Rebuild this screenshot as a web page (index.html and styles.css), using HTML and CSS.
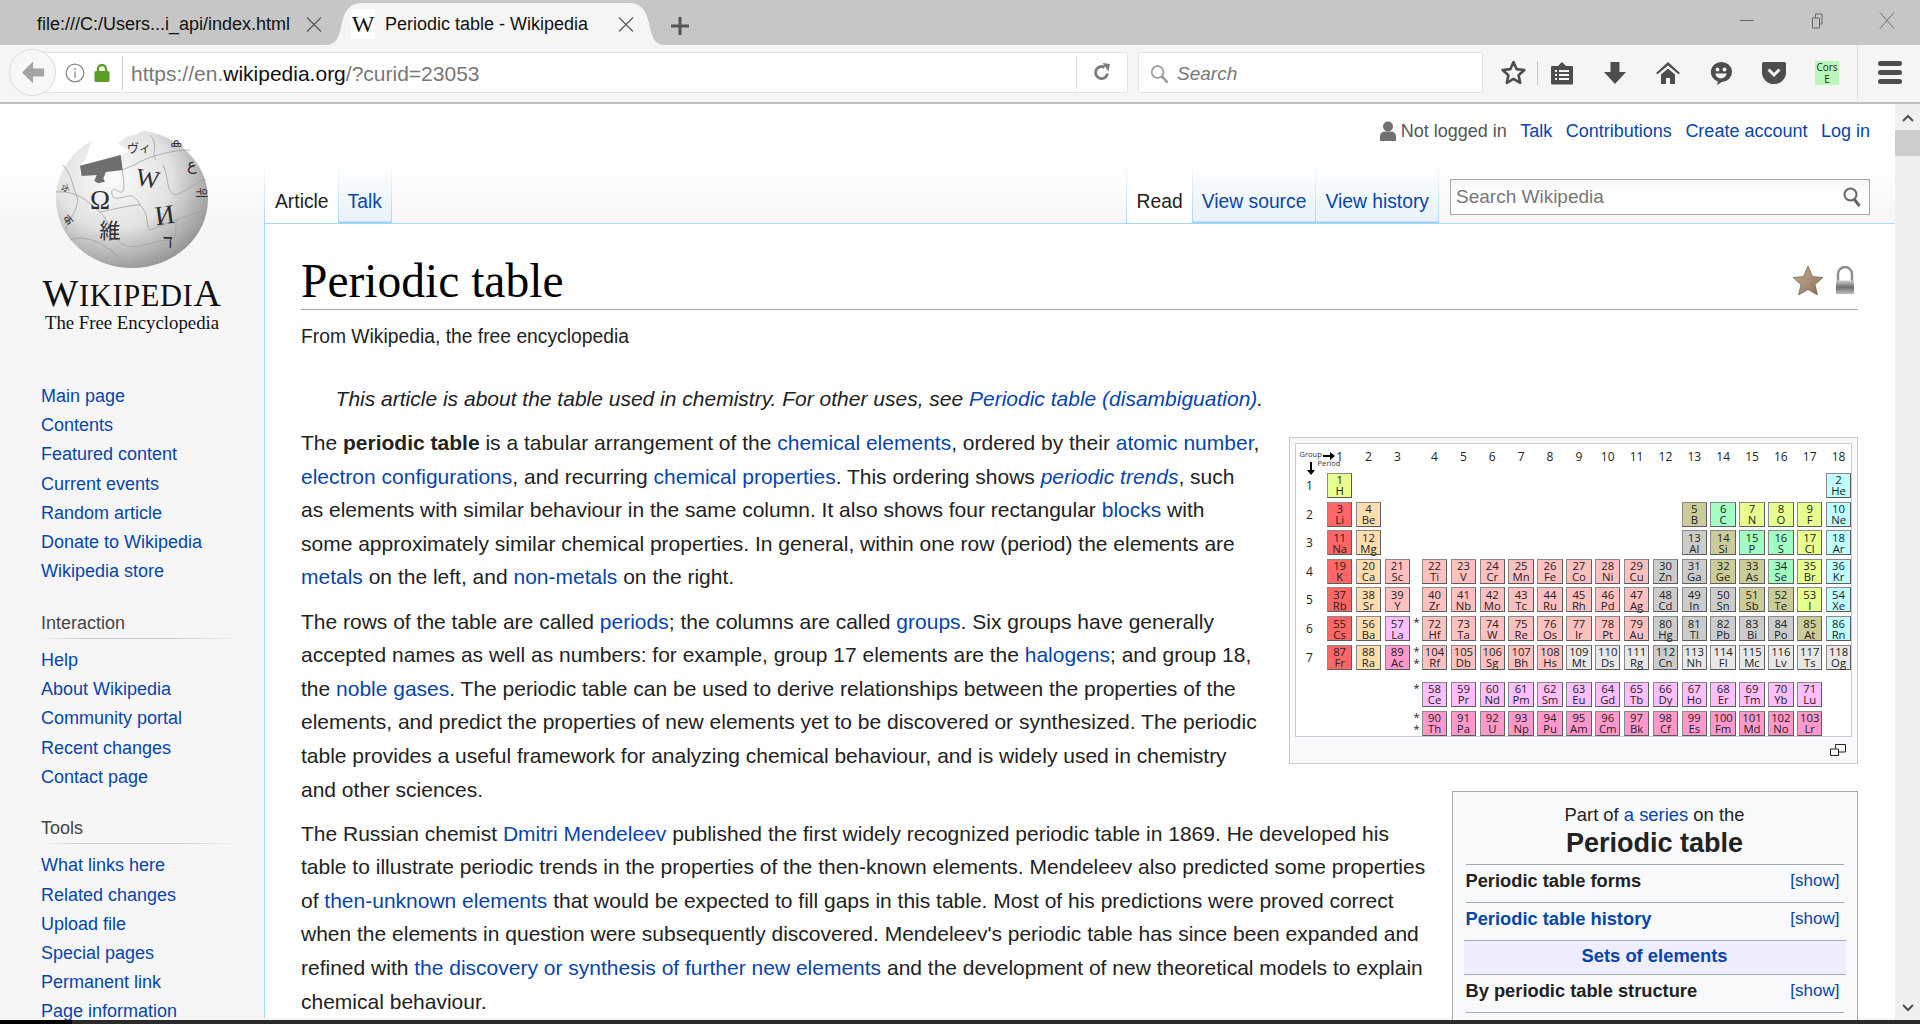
FILE: index.html
```html
<!DOCTYPE html>
<html lang="en">
<head>
    <meta charset="UTF-8">
    <title>Periodic table - Wikipedia</title>
    <link rel="stylesheet" href="styles.css">
</head>
<body>
    <div class="tabstrip">
        <div class="tab">
            <span class="tab-title">file:///C:/Users...i_api/index.html</span>
            <svg class="tab-close" viewBox="0 0 16 16"><path d="M1 1l14 14M15 1L1 15"/></svg>
        </div>
        <div class="tab tab-active">
            <span class="favicon">W</span>
            <span class="tab-title">Periodic table - Wikipedia</span>
            <svg class="tab-close" viewBox="0 0 16 16"><path d="M1 1l14 14M15 1L1 15"/></svg>
        </div>
        <svg class="tab-new" viewBox="0 0 18 18"><path d="M9 0v18M0 9h18"/></svg>
        <div class="window-controls">
            <svg viewBox="0 0 16 16"><path d="M1 8h14"/></svg>
            <svg viewBox="0 0 16 16"><path d="M3.500 5.500h7v10h-7zM6.500 5.500v-4h6.500v10h-2.500"/></svg>
            <svg viewBox="0 0 18 18"><path d="M1 0l16 18M17 0L1 18"/></svg>
        </div>
    </div>

    <div class="toolbar">
        <div class="back-button">
            <svg viewBox="0 0 24 24"><path d="M12 1L1 12l11 11v-7h11V8H12z"/></svg>
        </div>
        <div class="urlbar">
            <svg class="url-info" viewBox="0 0 20 20"><circle cx="10" cy="10" r="8.800"/><path d="M10 8.500v6.500M10 5v1.800"/></svg>
            <svg class="url-lock" viewBox="0 0 16 20"><path d="M4 9V6a4 4 0 0 1 8 0v3" fill="none" stroke="#5b9e24" stroke-width="2.400"/><rect x="0.500" y="8" width="15" height="11" rx="1.500" fill="#5b9e24"/></svg>
            <span class="url-text">https://en.<b>wikipedia.org</b>/?curid=23053</span>
            <span class="url-sep"></span>
            <svg class="url-reload" viewBox="0 0 20 20"><path d="M15.500 10.500a6 6 0 1 1-3-6.200" fill="none" stroke="#7c7c7c" stroke-width="2.800"/><path d="M10.500 0l7.500 1-1.500 7.500z" fill="#7c7c7c"/></svg>
        </div>
        <div class="searchbar">
            <svg viewBox="0 0 20 20"><circle cx="8" cy="8" r="6.200"/><path d="M12.500 12.500l6 6.500" stroke-width="2.600"/></svg>
            <span>Search</span>
        </div>
        <svg class="tool-star" viewBox="0 0 24 24"><path d="M12 2l3 6.800 7.400.8-5.500 5 1.500 7.300L12 18.200l-6.400 3.700 1.500-7.300-5.500-5 7.400-.8z"/></svg>
        <span class="tool-sep"></span>
        <div class="tools">
            <svg viewBox="0 0 24 24"><path d="M2 5h6l4-4 4 4h6a1.500 1.500 0 0 1 1 1.500v16a1.500 1.500 0 0 1-1 1H2a1.500 1.500 0 0 1-1-1v-16A1.500 1.500 0 0 1 2 5z" fill="#4d4d4d"/><path d="M5 10h2M9 10h10M5 14h2M9 14h10M5 18h2M9 18h10" stroke="#f5f5f5" stroke-width="2"/></svg>
            <svg viewBox="0 0 24 24"><path d="M7.500 1h9v10h6.500L12 23 1 11h6.500z" fill="#4d4d4d"/></svg>
            <svg viewBox="0 0 24 24"><path d="M12 1L0 12l1.500 1.200L12 4.500l10.500 8.700L24 12z" fill="#4d4d4d"/><path d="M12 7.500l-7 6V23h5v-6h4v6h5v-9.500z" fill="#4d4d4d"/></svg>
            <svg viewBox="0 0 24 24"><path d="M12 1a10.500 10 0 0 1 1 20l-5 3 1-3.500A10.500 10 0 0 1 12 1z" fill="#4d4d4d"/><circle cx="8.500" cy="8.500" r="1.900" fill="#f5f5f5"/><circle cx="15.500" cy="8.500" r="1.900" fill="#f5f5f5"/><path d="M6.500 12.500h11a5.500 5 0 0 1-11 0z" fill="#f5f5f5"/></svg>
            <svg viewBox="0 0 24 24"><path d="M2.500 1h19A2 2 0 0 1 24 3v8.500A12 11.500 0 0 1 0 11.500V3a2 2 0 0 1 2.500-2z" fill="#4d4d4d"/><path d="M6.500 8.500L12 14l5.500-5.500" fill="none" stroke="#f5f5f5" stroke-width="3"/></svg>
            <div class="cors-badge">Cors<br>E</div>
        </div>
        <span class="tool-sep tool-sep-tall"></span>
        <div class="menu-button"><span></span><span></span><span></span></div>
    </div>

    <div class="viewport">
        <div class="page">
            <aside class="sidebar">
                <div class="logo">
                    <svg class="globe" viewBox="40 125 185 150">
                        <defs>
                            <radialGradient id="globeShade" cx="38%" cy="34%" r="76%">
                                <stop offset="0" stop-color="#fbfbfb"/>
                                <stop offset="0.500" stop-color="#e2e2e2"/>
                                <stop offset="1" stop-color="#868686"/>
                            </radialGradient>
                        </defs>
                        <ellipse cx="132" cy="199" rx="76" ry="69" fill="url(#globeShade)"/>
                        <g class="globe-seams">
                            <path d="M56 192C80 190 90 205 100 212C120 208 130 205 140 205"/>
                            <path d="M122 170L134 165C150 155 175 150 190 150"/>
                            <path d="M163 165C170 180 165 190 175 195C190 190 200 178 206 180"/>
                            <path d="M140 205C150 215 145 225 150 230C170 222 190 215 205 210"/>
                            <path d="M100 212C112 225 110 235 118 240C130 255 150 240 172 240"/>
                            <path d="M70 240C85 235 105 240 130 268"/>
                            <path d="M63 165C72 175 72 185 78 200C76 215 66 222 66 230"/>
                            <path d="M150 135C160 145 150 155 156 160"/>
                            <path d="M122 170C126 190 124 196 116 190C110 186 110 200 118 198C128 198 132 190 140 205"/>
                            <path d="M172 240C180 230 172 222 180 218"/>
                        </g>
                        <path fill="#fff" d="M96.700 128L89.300 146.700L87.300 156L80 165.700L120.700 155L129.300 150.700L117.300 143.300L127.700 136L136.700 134.300L146.700 129L146.700 120L100 120z"/>
                        <path fill="#6e6e6e" d="M80 165.700L120.700 155L122.700 170L106 172L103.300 178.300L105 181.700L98.300 183.300L94.300 181L96.700 175L81.700 176z"/>
                        <g class="globe-glyphs">
                            <text x="100" y="209" font-size="27">Ω</text>
                            <text x="148" y="187" font-size="25" transform="rotate(10 148 177)">W</text>
                            <text x="164" y="224" font-size="27" transform="rotate(-8 164 211)">И</text>
                            <text x="110" y="238" font-size="21" class="glyph-cjk">維</text>
                            <text x="139" y="153" font-size="12" class="glyph-cjk">ヴィ</text>
                            <text x="168" y="248" font-size="20">ד</text>
                            <text x="192" y="170" font-size="16">ع</text>
                            <text x="201" y="197" font-size="12" class="glyph-cjk" transform="rotate(90 201 193)">위</text>
                            <text x="175" y="147" font-size="12">ക</text>
                            <text x="65" y="192" font-size="11" transform="rotate(70 65 188)">ক</text>
                            <text x="68" y="224" font-size="12" transform="rotate(50 68 220)">क</text>
                        </g>
                    </svg>
                    <div class="wordmark"><span>W</span>IKIPEDI<span>A</span></div>
                    <div class="tagline">The Free Encyclopedia</div>
                </div>
                <ul class="portal-list portal-first">
                    <li><a href="#">Main page</a></li>
                    <li><a href="#">Contents</a></li>
                    <li><a href="#">Featured content</a></li>
                    <li><a href="#">Current events</a></li>
                    <li><a href="#">Random article</a></li>
                    <li><a href="#">Donate to Wikipedia</a></li>
                    <li><a href="#">Wikipedia store</a></li>
                </ul>
                <h3 class="portal-heading">Interaction</h3>
                <ul class="portal-list">
                    <li><a href="#">Help</a></li>
                    <li><a href="#">About Wikipedia</a></li>
                    <li><a href="#">Community portal</a></li>
                    <li><a href="#">Recent changes</a></li>
                    <li><a href="#">Contact page</a></li>
                </ul>
                <h3 class="portal-heading">Tools</h3>
                <ul class="portal-list">
                    <li><a href="#">What links here</a></li>
                    <li><a href="#">Related changes</a></li>
                    <li><a href="#">Upload file</a></li>
                    <li><a href="#">Special pages</a></li>
                    <li><a href="#">Permanent link</a></li>
                    <li><a href="#">Page information</a></li>
                </ul>
            </aside>

            <main class="content">
                <div class="personal">
                    <svg class="user-icon" viewBox="0 0 16 20"><circle cx="8" cy="5.500" r="5"/><path d="M0 20v-4.500Q0 11 5 10.500h6q5 .5 5 5V20z"/></svg>
                    <span class="not-logged">Not logged in</span>
                    <a href="#">Talk</a>
                    <a href="#">Contributions</a>
                    <a href="#">Create account</a>
                    <a href="#">Log in</a>
                </div>
                <div class="head-row">
                    <div class="vtabs">
                        <a class="vtab vtab-selected" href="#">Article</a>
                        <a class="vtab" href="#">Talk</a>
                    </div>
                    <div class="head-right">
                        <div class="vtabs">
                            <a class="vtab vtab-selected" href="#">Read</a>
                            <a class="vtab" href="#">View source</a>
                            <a class="vtab" href="#">View history</a>
                        </div>
                        <div class="wiki-search">
                            <span>Search Wikipedia</span>
                            <svg viewBox="0 0 18 20"><circle cx="7.500" cy="7.500" r="6"/><path d="M11.500 12.500l5 6.500" stroke-width="3"/></svg>
                        </div>
                    </div>
                </div>

                <article class="article">
                    <div class="page-icons">
                        <svg class="icon-star" viewBox="0 0 30 29">
                            <defs>
                                <linearGradient id="starFill" x1="0" y1="0" x2="1" y2="1">
                                    <stop offset="0" stop-color="#c9a763"/>
                                    <stop offset="0.500" stop-color="#a8917f"/>
                                    <stop offset="1" stop-color="#8a6f3f"/>
                                </linearGradient>
                            </defs>
                            <path d="M15 0l4.500 10.500L30 11.500l-8 7 2.500 10.500L15 23.500 5.500 29 8 18.500l-8-7 10.500-1z" fill="url(#starFill)" stroke="#5e5340" stroke-width="0.600"/>
                        </svg>
                        <svg class="icon-lock" viewBox="0 0 22 29">
                            <defs>
                                <linearGradient id="lockBody" x1="0" y1="0" x2="0" y2="1">
                                    <stop offset="0" stop-color="#cfcfcf"/>
                                    <stop offset="0.500" stop-color="#6f6f6f"/>
                                    <stop offset="1" stop-color="#bdbdbd"/>
                                </linearGradient>
                            </defs>
                            <path d="M4 16V8a7 7 0 0 1 14 0V16" fill="none" stroke="#8e8e8e" stroke-width="2.400"/>
                            <rect x="2" y="14.500" width="18" height="13.500" rx="1" fill="url(#lockBody)"/>
                        </svg>
                    </div>
                    <h1 class="page-title">Periodic table</h1>
                    <div class="site-sub">From Wikipedia, the free encyclopedia</div>
                    <div class="hatnote">This article is about the table used in chemistry. For other uses, see <a href="#">Periodic table (disambiguation)</a>.</div>

                    <figure class="thumb">
                        <div class="ptable" id="ptable">
                            <div class="ptable-corner">
                                <span class="corner-group">Group</span>
                                <svg class="corner-right" viewBox="0 0 12 8"><path d="M0 3h7V0l5 4-5 4V5H0z"/></svg>
                                <span class="corner-period">Period</span>
                                <svg class="corner-down" viewBox="0 0 8 13"><path d="M3 0h2v8h3l-4 5-4-5h3z"/></svg>
                            </div>
                        </div>
                        <figcaption class="thumb-caption">
                            <svg viewBox="0 0 16 12"><path d="M5.500 4.500V.5h10v7.500H9M.5 5h8v6.500h-8z"/></svg>
                        </figcaption>
                    </figure>

                    <aside class="infobox">
                        <div class="infobox-pre">Part of <a href="#">a series</a> on the</div>
                        <div class="infobox-title">Periodic table</div>
                        <div class="infobox-row"><b>Periodic table forms</b><a class="show-link" href="#">[show]</a></div>
                        <div class="infobox-row"><b><a href="#">Periodic table history</a></b><a class="show-link" href="#">[show]</a></div>
                        <div class="infobox-band"><a href="#">Sets of elements</a></div>
                        <div class="infobox-row infobox-row-plain"><b>By periodic table structure</b><a class="show-link" href="#">[show]</a></div>
                    </aside>

                    <p>The <b>periodic table</b> is a tabular arrangement of the <a href="#">chemical elements</a>, ordered by their <a href="#">atomic number</a>, <a href="#">electron configurations</a>, and recurring <a href="#">chemical properties</a>. This ordering shows <i><a href="#">periodic trends</a></i>, such as elements with similar behaviour in the same column. It also shows four rectangular <a href="#">blocks</a> with some approximately similar chemical properties. In general, within one row (period) the elements are <a href="#">metals</a> on the left, and <a href="#">non-metals</a> on the right.</p>
                    <p>The rows of the table are called <a href="#">periods</a>; the columns are called <a href="#">groups</a>. Six groups have generally accepted names as well as numbers: for example, group 17 elements are the <a href="#">halogens</a>; and group 18, the <a href="#">noble gases</a>. The periodic table can be used to derive relationships between the properties of the elements, and predict the properties of new elements yet to be discovered or synthesized. The periodic table provides a useful framework for analyzing chemical behaviour, and is widely used in chemistry and other sciences.</p>
                    <p>The Russian chemist <a href="#">Dmitri Mendeleev</a> published the first widely recognized periodic table in 1869. He developed his table to illustrate periodic trends in the properties of the then-known elements. Mendeleev also predicted some properties of <a href="#">then-unknown elements</a> that would be expected to fill gaps in this table. Most of his predictions were proved correct when the elements in question were subsequently discovered. Mendeleev's periodic table has since been expanded and refined with <a href="#">the discovery or synthesis of further new elements</a> and the development of new theoretical models to explain chemical behaviour.</p>
                </article>
            </main>
        </div>

        <div class="scrollbar">
            <svg class="scroll-arrow" viewBox="0 0 12 8"><path d="M1 7l5-5 5 5"/></svg>
            <div class="scroll-thumb"></div>
            <svg class="scroll-arrow scroll-arrow-down" viewBox="0 0 12 8"><path d="M1 1l5 5 5-5"/></svg>
        </div>
    </div>

    <div class="taskbar"></div>

    <script src="script.js"></script>
</body>
</html>
```

FILE: styles.css
```css
* {
    box-sizing: border-box;
}
html, body {
    height: 100%;
}
body {
    margin: 0;
    display: flex;
    flex-direction: column;
    overflow: hidden;
    font-family: "Liberation Sans", Arial, sans-serif;
    color: #222;
    background: #fff;
}
a {
    color: #0645ad;
    text-decoration: none;
}

/* browser tabs */
.tabstrip {
    flex: 0 0 45px;
    display: flex;
    align-items: flex-end;
    padding-left: 37px;
    background: #c6c6c6;
}
.tab {
    display: flex;
    align-items: center;
    height: 42px;
    width: 288px;
    font-size: 18px;
    color: #111;
}
.tab .tab-close {
    margin-left: 16px;
}
.tab-title {
    white-space: nowrap;
}
.tab-close {
    width: 16px;
    height: 17px;
    flex: none;
    fill: none;
    stroke: #555;
    stroke-width: 1.100;
}
.tab-active {
    width: 341px;
    padding-left: 26px;
    background: #f5f5f5;
    clip-path: path('M0 42C12 42 14 34 17 20C20 8 24 0 38 0H303C317 0 321 8 324 20C327 34 329 42 341 42Z');
}
.tab-active .tab-close {
    margin-left: 30px;
}
.favicon {
    flex: none;
    width: 24px;
    height: 30px;
    margin-right: 10px;
    background: #fff;
    text-align: center;
    font: 24px/30px "Liberation Serif", serif;
    color: #111;
}
.tab-new {
    width: 18px;
    height: 18px;
    margin: 0 0 10px 5px;
    fill: none;
    stroke: #555;
    stroke-width: 3;
}
.window-controls {
    display: flex;
    align-items: center;
    gap: 54px;
    margin-left: auto;
    margin-right: 25px;
    align-self: flex-start;
    padding-top: 12px;
}
.window-controls svg {
    width: 16px;
    height: 17px;
    fill: none;
    stroke: #666;
    stroke-width: 1;
}

/* browser toolbar */
.toolbar {
    flex: 0 0 59px;
    display: flex;
    align-items: center;
    padding: 0 18px 2px 9px;
    background: #f5f5f5;
    border-bottom: 2px solid #bcbcbc;
}
.back-button {
    position: relative;
    z-index: 1;
    flex: none;
    width: 47px;
    height: 47px;
    display: flex;
    align-items: center;
    justify-content: center;
    background: #f7f7f7;
    border: 1px solid #dcdcdc;
    border-radius: 50%;
}
.back-button svg {
    width: 24px;
    height: 27px;
    fill: #a4a4a4;
}
.urlbar {
    flex: 1;
    height: 41px;
    margin-left: -17px;
    display: flex;
    align-items: center;
    background: #fff;
    border: 1px solid #e3e3e3;
    border-radius: 0 2px 2px 0;
}
.url-info {
    width: 20px;
    height: 20px;
    margin-left: 25px;
    fill: none;
    stroke: #8a8a8a;
    stroke-width: 1.300;
}
.url-lock {
    width: 16px;
    height: 20px;
    margin-left: 9px;
}
.url-text {
    margin-left: 12px;
    padding: 1px 0 0 8px;
    border-left: 1px solid #ccc;
    font-size: 21px;
    line-height: 33px;
    color: #777;
    white-space: nowrap;
}
.url-text b {
    font-weight: normal;
    color: #111;
}
.url-sep {
    width: 1px;
    height: 33px;
    margin-left: auto;
    background: #ddd;
}
.url-reload {
    width: 20px;
    height: 20px;
    margin: 0 15px 0 15px;
}
.searchbar {
    flex: 0 0 345px;
    height: 41px;
    margin-left: 10px;
    display: flex;
    align-items: center;
    gap: 8px;
    padding: 2px 0 0 11px;
    background: #fff;
    border: 1px solid #e3e3e3;
    border-radius: 2px;
    font-size: 19px;
    font-style: italic;
    color: #777;
}
.searchbar svg {
    width: 19px;
    height: 20px;
    fill: none;
    stroke: #999;
    stroke-width: 1.800;
}
.tool-star {
    flex: none;
    width: 25px;
    height: 25px;
    margin-left: 18px;
    fill: none;
    stroke: #4d4d4d;
    stroke-width: 2.500;
    stroke-linejoin: round;
}
.tool-sep {
    flex: none;
    width: 1px;
    height: 24px;
    margin: 0 12px 0 11px;
    background: #c8c8c8;
}
.tool-sep-tall {
    align-self: stretch;
    height: auto;
    margin: 0 20px 0 18px;
    background: #dedede;
}
.tools {
    display: flex;
    align-items: center;
    gap: 29px;
}
.tools svg {
    width: 24px;
    height: 24px;
    flex: none;
}
.cors-badge {
    width: 24px;
    height: 24px;
    background: #baf7b8;
    text-align: center;
    font: 10px/12px "Open Sans", sans-serif;
    color: #222;
}
.menu-button {
    display: flex;
    flex-direction: column;
    gap: 4px;
    flex: none;
    width: 24px;
}
.menu-button span {
    height: 5px;
    border-radius: 3px;
    background: #4d4d4d;
}

/* page area */
.viewport {
    flex: 1;
    min-height: 0;
    display: flex;
}
.page {
    flex: 1;
    min-width: 0;
    display: flex;
    overflow: hidden;
    background: linear-gradient(#fff 60px, #f6f6f6 120px);
}
.sidebar {
    flex: 0 0 264px;
    font-size: 18px;
}
.logo {
    padding-top: 21px;
    text-align: center;
    font-family: "Liberation Serif", serif;
    color: #111;
}
.globe {
    display: block;
    width: 185px;
    height: 150px;
    margin-left: 40px;
}
.globe-seams path {
    fill: none;
    stroke: #a0a0a0;
    stroke-width: 0.800;
}
.globe-glyphs text {
    font-family: "Liberation Serif", "DejaVu Serif", serif;
    text-anchor: middle;
    fill: #2c2c2c;
}
.globe-glyphs .glyph-cjk {
    font-family: "Noto Sans CJK JP", sans-serif;
}
.wordmark {
    width: 264px;
    font-size: 30.500px;
    line-height: 36px;
    letter-spacing: 0.600px;
}
.wordmark span {
    font-size: 38px;
}
.tagline {
    width: 264px;
    margin-top: -2px;
    font-size: 18.800px;
    line-height: 21px;
}
.portal-list {
    list-style: none;
    margin: 7px 0 0;
    padding: 0 0 0 41px;
}
.portal-first {
    margin-top: 49px;
}
.portal-list li {
    line-height: 29.200px;
    white-space: nowrap;
}
.portal-heading {
    margin: 21.500px 0 0 41px;
    width: 197px;
    font-size: 18px;
    font-weight: normal;
    line-height: 30px;
    color: #444;
    border-bottom: 1px solid;
    border-image: linear-gradient(to right, #f6f6f6, #c8ccd1 20%, #c8ccd1 70%, #f6f6f6) 1;
}

/* wiki head */
.content {
    flex: 1;
    min-width: 0;
}
.personal {
    display: flex;
    justify-content: flex-end;
    align-items: center;
    gap: 13.500px;
    height: 54px;
    padding: 0 25px 0 0;
    font-size: 18px;
}
.user-icon {
    width: 16px;
    height: 20px;
    margin-right: -9px;
    fill: #707070;
}
.not-logged {
    color: #555;
}
.head-row {
    display: flex;
    justify-content: space-between;
    height: 65px;
    padding-top: 5px;
}
.head-right {
    display: flex;
    padding-right: 25px;
}
.vtabs {
    display: flex;
}
.vtab {
    padding: 24.500px 9px 0;
    font-size: 19.300px;
    line-height: 28px;
    background: linear-gradient(to top, #77c1f6 0, #e8f2f8 2px, #fff 100%);
    border-right: 1px solid;
    border-image: linear-gradient(to bottom, #fff, #a7d7f9) 1;
    white-space: nowrap;
}
.vtab-selected {
    padding-left: 10px;
    color: #222;
    background: #fff;
    border-left: 1px solid;
}
.wiki-search {
    width: 420px;
    height: 36px;
    margin: 16px 0 0 11px;
    padding: 0 8px 0 5px;
    display: flex;
    align-items: center;
    justify-content: space-between;
    background: linear-gradient(#f5f5f5, #fff 40%);
    border: 1px solid #a2a9b1;
    font-size: 19px;
    color: #777;
}
.wiki-search svg {
    width: 18px;
    height: 20px;
    fill: none;
    stroke: #666;
    stroke-width: 2;
}

/* article */
.article {
    position: relative;
    padding: 29px 37.500px 0 36px;
    background: #fff;
    border-top: 1px solid #a7d7f9;
    border-left: 1px solid #a7d7f9;
    font-size: 21px;
    line-height: 33.600px;
}
.page-icons {
    position: absolute;
    top: 42px;
    right: 39px;
    display: flex;
    gap: 11px;
}
.icon-star {
    width: 30px;
    height: 29px;
}
.icon-lock {
    width: 22px;
    height: 29px;
}
.page-title {
    margin: 0;
    font: normal 47.500px/56px "Liberation Serif", serif;
    color: #000;
    border-bottom: 1px solid #a2a9b1;
}
.site-sub {
    margin-top: 12px;
    font-size: 19.300px;
    line-height: 30px;
}
.hatnote {
    margin: 30px 0 10.500px;
    padding-left: 34.600px;
    font-style: italic;
}
.article p {
    margin: 10.500px 0;
}
.thumb {
    float: right;
    clear: right;
    width: 569px;
    margin: 10.500px 0 27.300px 28px;
    padding: 5px 5px 0;
    background: #f8f9fa;
    border: 1px solid #c8ccd1;
}

/* periodic table picture */
.ptable {
    position: relative;
    height: 294.500px;
    display: grid;
    grid-template-columns: 28px repeat(3, 25.500px) 5px repeat(15, 25.500px);
    grid-template-rows: 25.600px repeat(7, 25px) 4.660px 25.300px 25.300px;
    gap: 3.670px 3.360px;
    background: #fff;
    border: 1px solid #c8ccd1;
    font-family: "Open Sans", sans-serif;
    font-size: 11.300px;
    line-height: 11px;
    color: #222;
}
.cell {
    display: flex;
    flex-direction: column;
    align-items: center;
    justify-content: center;
    border: 1.500px solid #5c5c5c;
    border-top-color: #8a8a8a;
    border-left-color: #8a8a8a;
    white-space: nowrap;
}
.cat-a { background: #ff6666; }
.cat-e { background: #ffdead; }
.cat-l { background: #ffbfff; }
.cat-c { background: #ff99cc; }
.cat-t { background: #ffc0c0; }
.cat-o { background: #cccccc; }
.cat-m { background: #cccc99; }
.cat-d { background: #e7ff8f; }
.cat-p { background: #a1ffc3; }
.cat-n { background: #c0ffff; }
.cat-u { background: #e8e8e8; }
.label {
    display: flex;
    align-items: center;
    justify-content: center;
    font-size: 12px;
}
.star-mark {
    text-align: center;
    font-size: 11px;
    line-height: 12px;
    white-space: pre-line;
}
.ptable-corner {
    position: absolute;
    inset: 0 auto auto 0;
    width: 30px;
    height: 34px;
    font-size: 7.500px;
    line-height: 9px;
    color: #333;
}
.corner-group {
    position: absolute;
    left: 4px;
    top: 6px;
}
.corner-right {
    position: absolute;
    left: 27px;
    top: 8px;
    width: 12px;
    height: 8px;
}
.corner-period {
    position: absolute;
    left: 22px;
    top: 15px;
}
.corner-down {
    position: absolute;
    left: 11px;
    top: 18px;
    width: 8px;
    height: 13px;
}
.thumb-caption {
    height: 25.500px;
    display: flex;
    justify-content: flex-end;
    align-items: center;
    padding-right: 6px;
}
.thumb-caption svg {
    width: 16px;
    height: 12px;
    fill: none;
    stroke: #222;
}

/* infobox */
.infobox {
    float: right;
    clear: right;
    width: 406px;
    margin: 0 0 10px 21px;
    padding: 10px 13px 40px;
    background: #f8f9fa;
    border: 1px solid #a2a9b1;
    font-size: 18.400px;
    line-height: 25px;
}
.infobox-pre {
    text-align: center;
}
.infobox-title {
    padding-bottom: 4px;
    text-align: center;
    font-size: 27px;
    font-weight: bold;
    line-height: 33px;
}
.infobox-row {
    display: flex;
    justify-content: space-between;
    height: 38px;
    padding-right: 4px;
    border-top: 1px solid #a2a9b1;
    line-height: 31.500px;
}
.infobox-row b {
    font-size: 18.300px;
}
.show-link {
    font-size: 17px;
}
.infobox-row-plain {
    border-top: 0;
    border-bottom: 1px solid #a2a9b1;
}
.infobox-band {
    margin: 0 -2px;
    height: 35px;
    background: #eeeeff;
    border-top: 1px solid #a2a9b1;
    border-bottom: 1px solid #a2a9b1;
    text-align: center;
    font-weight: bold;
    line-height: 29px;
}

/* scrollbar */
.scrollbar {
    flex: 0 0 25px;
    display: flex;
    flex-direction: column;
    align-items: center;
    background: #f0f0f0;
}
.scroll-arrow {
    width: 12px;
    height: 8px;
    margin-top: 10px;
    fill: none;
    stroke: #505050;
    stroke-width: 2;
}
.scroll-thumb {
    width: 100%;
    height: 26px;
    margin-top: 8px;
    background: #cdcdcd;
}
.scroll-arrow-down {
    margin-top: auto;
    margin-bottom: 8px;
}

.taskbar {
    flex: 0 0 4px;
    background: linear-gradient(to right, #000 72px, #2b2b2b 72px);
}
```

FILE: script.js
```js
// Build the periodic table cells from a flat list, in atomic number order
const elements = 'H.d He.n Li.a Be.e B.m C.p N.d O.d F.d Ne.n Na.a Mg.e Al.o Si.m P.p S.p Cl.d Ar.n ' +
    'K.a Ca.e Sc.t Ti.t V.t Cr.t Mn.t Fe.t Co.t Ni.t Cu.t Zn.o Ga.o Ge.m As.m Se.p Br.d Kr.n ' +
    'Rb.a Sr.e Y.t Zr.t Nb.t Mo.t Tc.t Ru.t Rh.t Pd.t Ag.t Cd.o In.o Sn.o Sb.m Te.m I.d Xe.n ' +
    'Cs.a Ba.e La.l Ce.l Pr.l Nd.l Pm.l Sm.l Eu.l Gd.l Tb.l Dy.l Ho.l Er.l Tm.l Yb.l Lu.l ' +
    'Hf.t Ta.t W.t Re.t Os.t Ir.t Pt.t Au.t Hg.o Tl.o Pb.o Bi.o Po.o At.m Rn.n ' +
    'Fr.a Ra.e Ac.c Th.c Pa.c U.c Np.c Pu.c Am.c Cm.c Bk.c Cf.c Es.c Fm.c Md.c No.c Lr.c ' +
    'Rf.t Db.t Sg.t Bh.t Hs.t Mt.u Ds.u Rg.u Cn.o Nh.u Fl.u Mc.u Lv.u Ts.u Og.u';

// Returns [grid row, group] for an atomic number
function place(z) {
    if (z <= 2) return [2, z === 1 ? 1 : 18];
    if (z <= 10) return [3, z <= 4 ? z - 2 : z + 8];
    if (z <= 18) return [4, z <= 12 ? z - 10 : z];
    if (z <= 36) return [5, z - 18];
    if (z <= 54) return [6, z - 36];
    if (z <= 57) return [7, z - 54];
    if (z <= 71) return [10, z - 54];
    if (z <= 86) return [7, z - 68];
    if (z <= 89) return [8, z - 86];
    if (z <= 103) return [11, z - 86];
    return [8, z - 100];
}

function gridColumn(group) {
    return group <= 3 ? group + 1 : group + 2;
}

const table = document.getElementById('ptable');

function addToTable(className, row, column, html) {
    const div = document.createElement('div');
    div.className = className;
    div.style.gridRow = row;
    div.style.gridColumn = column;
    div.innerHTML = html;
    table.appendChild(div);
}

for (let g = 1; g <= 18; g++) {
    addToTable('label', 1, gridColumn(g), g);
}
for (let p = 1; p <= 7; p++) {
    addToTable('label', p + 1, 1, p);
}

elements.split(' ').forEach((entry, index) => {
    const [symbol, category] = entry.split('.');
    const z = index + 1;
    const [row, group] = place(z);
    addToTable('cell cat-' + category, row, gridColumn(group), '<span>' + z + '</span><span>' + symbol + '</span>');
});

[[7, '*'], [8, '*\n*'], [10, '*'], [11, '*\n*']].forEach(([row, marks]) => {
    addToTable('star-mark', row, 5, marks);
});
```
